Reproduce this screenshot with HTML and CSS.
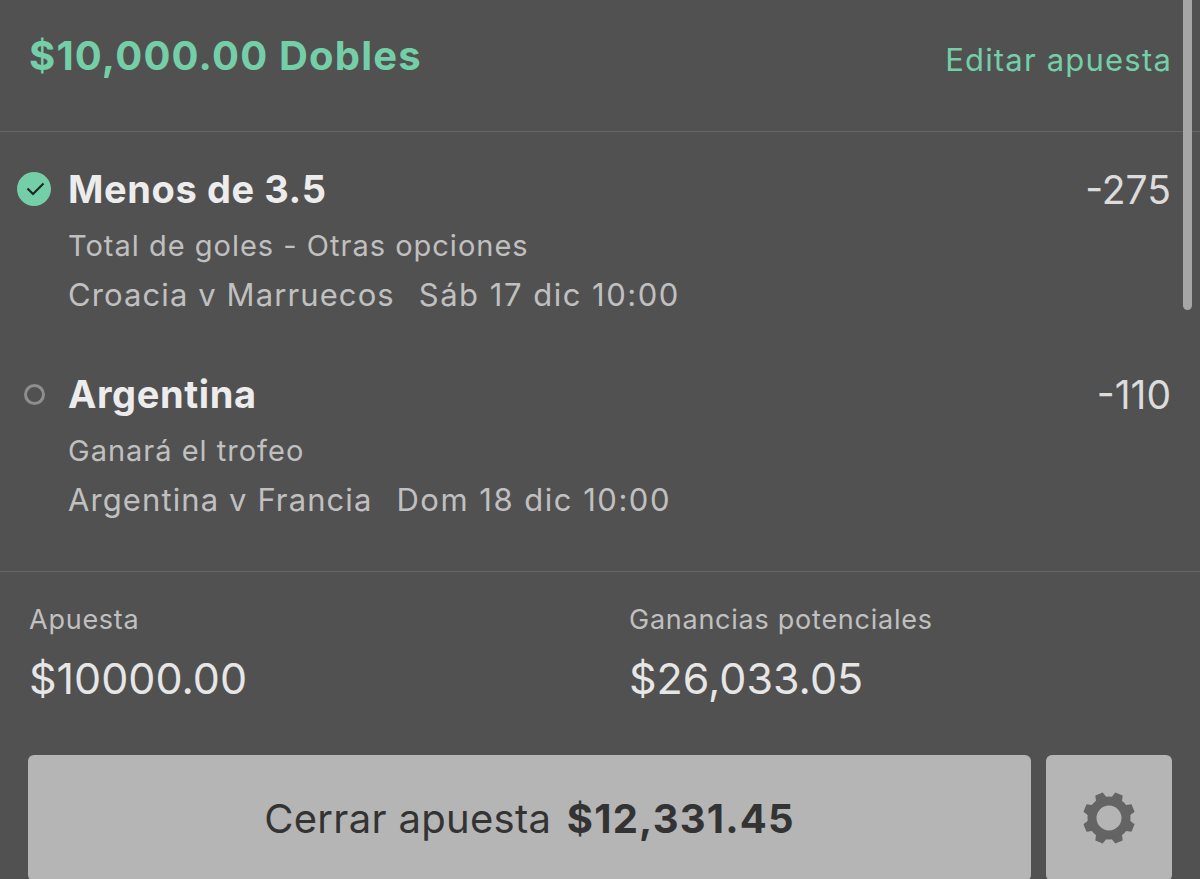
FILE: index.html
```html
<!DOCTYPE html>
<html lang="es">
<head>
    <meta charset="UTF-8">
    <meta name="viewport" content="width=device-width, initial-scale=1.0">
    <title>Cerrar apuesta</title>
    <link rel="stylesheet" href="styles.css">
</head>
<body>
    <div class="bet-card">
        <div class="scroll-thumb"></div>

        <div class="bet-header">
            <h2 class="bet-title">$10,000.00 Dobles</h2>
            <a class="edit-link" href="#">Editar apuesta</a>
        </div>

        <div class="selections">
            <div class="selection">
                <div class="status">
                    <svg class="status-check" viewBox="0 0 34 34" width="34" height="34">
                        <circle cx="17" cy="17" r="17" fill="#74cfa9"/>
                        <path d="M10.5 16.5l5.5 5.5L26.5 11.5" fill="none" stroke="#1d2b26" stroke-width="2.2"/>
                    </svg>
                </div>
                <div class="selection-info">
                    <div class="selection-top">
                        <span class="selection-name">Menos de 3.5</span>
                        <span class="selection-odds">-275</span>
                    </div>
                    <div class="selection-market">Total de goles - Otras opciones</div>
                    <div class="selection-event"><span>Croacia v Marruecos</span><span class="event-date">Sáb 17 dic 10:00</span></div>
                </div>
            </div>

            <div class="selection">
                <div class="status">
                    <span class="status-open"></span>
                </div>
                <div class="selection-info">
                    <div class="selection-top">
                        <span class="selection-name">Argentina</span>
                        <span class="selection-odds">-110</span>
                    </div>
                    <div class="selection-market">Ganará el trofeo</div>
                    <div class="selection-event"><span>Argentina v Francia</span><span class="event-date">Dom 18 dic 10:00</span></div>
                </div>
            </div>
        </div>

        <div class="bet-summary">
            <div class="summary-col">
                <div class="summary-label">Apuesta</div>
                <div class="summary-value">$10000.00</div>
            </div>
            <div class="summary-col">
                <div class="summary-label">Ganancias potenciales</div>
                <div class="summary-value">$26,033.05</div>
            </div>
        </div>

        <div class="bet-actions">
            <button class="cashout-btn" type="button">Cerrar apuesta <b>$12,331.45</b></button>
            <button class="settings-btn" type="button" aria-label="Ajustes">
                <svg viewBox="-27 -27 54 54" width="54" height="54">
                    <circle r="17" fill="none" stroke="#646464" stroke-width="9"/>
                    <g fill="#646464">
                        <polygon points="-6,-19 -4,-26 4,-26 6,-19" transform="rotate(22.5)"/>
                        <polygon points="-6,-19 -4,-26 4,-26 6,-19" transform="rotate(67.5)"/>
                        <polygon points="-6,-19 -4,-26 4,-26 6,-19" transform="rotate(112.5)"/>
                        <polygon points="-6,-19 -4,-26 4,-26 6,-19" transform="rotate(157.5)"/>
                        <polygon points="-6,-19 -4,-26 4,-26 6,-19" transform="rotate(202.5)"/>
                        <polygon points="-6,-19 -4,-26 4,-26 6,-19" transform="rotate(247.5)"/>
                        <polygon points="-6,-19 -4,-26 4,-26 6,-19" transform="rotate(292.5)"/>
                        <polygon points="-6,-19 -4,-26 4,-26 6,-19" transform="rotate(337.5)"/>
                    </g>
                </svg>
            </button>
        </div>
    </div>
</body>
</html>
```
FILE: styles.css
```css
html, body { margin: 0; height: 100%; overflow: hidden; background: #515151; }
body { font-family: Inter, "Liberation Sans", sans-serif; color: #e6e6e6; }

.bet-card { position: relative; height: 879px; overflow: hidden; }
.scroll-thumb { position: absolute; top: 0; left: 1183px; width: 9px; height: 310px; background: #a6a6a6; border-radius: 0 0 5px 5px; }

.bet-header { display: flex; justify-content: space-between; align-items: center; height: 132px; box-sizing: border-box; padding: 0 28px 0 29px; border-bottom: 1px solid #656565; }
.bet-title { margin: 0 0 20px; font-size: 40px; font-weight: 700; color: #74cfa9; letter-spacing: 1.2px; }
.edit-link { margin-bottom: 12px; font-size: 31px; color: #74cfa9; text-decoration: none; letter-spacing: 1.2px; }

.selections { display: flex; flex-direction: column; gap: 59px; height: 440px; box-sizing: border-box; padding: 35px 29px 0 17px; border-bottom: 1px solid #656565; }
.selection { display: flex; }
.status { width: 51px; height: 44px; flex: none; display: flex; align-items: center; }
.status-open { display: block; width: 15px; height: 15px; margin-left: 7px; border: 3px solid #8e8e8e; border-radius: 50%; }
.selection-info { flex: 1; }
.selection-top { display: flex; justify-content: space-between; align-items: center; height: 44px; }
.selection-name { font-size: 38px; font-weight: 700; color: #ececec; letter-spacing: 0.6px; }
.selection-odds { font-size: 39px; color: #dcdcdc; }
.selection-market { margin-top: 17px; font-size: 29px; line-height: 36px; color: #c0c0c0; letter-spacing: 1px; }
.selection-event { display: flex; gap: 24px; margin-top: 13px; font-size: 31px; line-height: 36px; color: #c0c0c0; letter-spacing: 1.1px; }
.event-date { letter-spacing: 1.5px; }

.bet-summary { display: flex; padding: 30px 29px 0; }
.summary-col { flex: none; width: 600px; }
.summary-label { font-size: 27px; line-height: 36px; color: #c0c0c0; letter-spacing: 0.75px; }
.summary-value { margin-top: 15px; font-size: 43px; line-height: 50px; color: #e6e6e6; }

.bet-actions { display: flex; gap: 15px; margin-top: 52px; padding: 0 28px; }
.cashout-btn, .settings-btn { height: 126px; padding: 0; border: none; border-radius: 6px; background: #b5b5b5; font-family: inherit; color: #333; }
.cashout-btn { width: 1003px; font-size: 40px; letter-spacing: 0.3px; }
.cashout-btn b { margin-left: 4px; font-weight: 700; letter-spacing: 1.2px; }
.settings-btn { width: 126px; display: flex; justify-content: center; align-items: center; }
```
